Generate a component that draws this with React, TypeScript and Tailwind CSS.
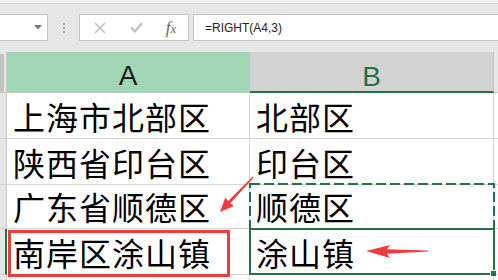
import React from 'react';

const cjk = { fontFamily: '"Noto Sans CJK SC", "Noto Sans", sans-serif' };

const rows = [
  { a: '上海市北部区', b: '北部区', h: 'h-[46px]' },
  { a: '陕西省印台区', b: '印台区', h: 'h-[46px]' },
  { a: '广东省顺德区', b: '顺德区', h: 'h-[44px]' },
  { a: '南岸区涂山镇', b: '涂山镇', h: 'h-[46px]' },
];

const FormulaBar: React.FC = () => (
  <div className="h-[52px] bg-[#e6e6e6] flex flex-col">
    <div className="h-[4px] bg-[#f1f1f1] border-b border-[#d5d5d5]" />
    <div className="flex items-start pt-[10px]">
      {/* Name box */}
      <div className="w-[48px] h-[27px] bg-white border-y border-r border-[#c6c6c6] flex items-center justify-end pr-[5px]">
        <svg width="8" height="5" viewBox="0 0 8 5">
          <path d="M0 0 H8 L4 4.5 Z" fill="#767676" />
        </svg>
      </div>
      {/* Grip dots */}
      <div className="w-[31px] h-[27px] flex flex-col items-center justify-center gap-[2px]">
        <span className="w-[2px] h-[2px] bg-[#a8a8a8]" />
        <span className="w-[2px] h-[2px] bg-[#a8a8a8]" />
        <span className="w-[2px] h-[2px] bg-[#a8a8a8]" />
      </div>
      {/* Cancel / enter / fx */}
      <div className="w-[110px] h-[27px] bg-white border border-[#c6c6c6] flex items-center">
        <div className="w-[38px] flex justify-center pl-[2px]">
          <svg width="12" height="12" viewBox="0 0 12 12">
            <path d="M1 1 L11 11 M11 1 L1 11" stroke="#bdbdbd" strokeWidth="1.6" />
          </svg>
        </div>
        <div className="w-[36px] flex justify-center">
          <svg width="13" height="11" viewBox="0 0 13 11">
            <path d="M1 5.5 L5 9.5 L12 1" stroke="#bdbdbd" strokeWidth="2" fill="none" />
          </svg>
        </div>
        <div className="w-[34px] flex justify-center">
          <span className="italic text-[17px] leading-none text-[#666]" style={{ fontFamily: '"Liberation Serif", serif' }}>
            f<span className="text-[13px]">x</span>
          </span>
        </div>
      </div>
      {/* Formula input */}
      <div className="ml-[4px] flex-1 h-[27px] bg-white border-y border-l border-[#c6c6c6] flex items-center pl-[11px]">
        <span className="text-[12px] text-[#222]" style={{ fontFamily: '"Liberation Sans", Arial, sans-serif' }}>
          =RIGHT(A4,3)
        </span>
      </div>
    </div>
  </div>
);

const Header: React.FC = () => (
  <div className="flex h-[41px]" style={{ fontFamily: '"Liberation Sans", Arial, sans-serif' }}>
    <div className="w-[7px] bg-[#e6e6e6] border-r border-b border-[#c8c8c8] flex items-end">
      <div className="w-[4px] h-[38px] bg-[#c2c2c2]" />
    </div>
    <div className="w-[243px] bg-[#a0d6b5] border-r border-b border-[#b8c8be] flex items-end justify-center pb-[2px]">
      <span className="text-[28px] leading-none text-[#1a1a1a]">A</span>
    </div>
    <div className="w-[244px] bg-[#d2d2d2] border-r border-[#c2c2c2] border-b-2 border-b-[#217346] flex items-end justify-center">
      <span className="text-[28px] leading-none text-[#217346]">B</span>
    </div>
    <div className="flex-1 bg-[#e6e6e6] border-b border-[#c8c8c8]" />
  </div>
);

export default function App() {
  return (
    <div className="relative w-[498px] h-[280px] overflow-hidden bg-white">
      <FormulaBar />
      <Header />
      {rows.map((r, i) => (
        <div key={i} className={`flex ${r.h}`}>
          <div className={`w-[7px] bg-[#e6e6e6] border-b border-[#d4d4d4] ${i === 3 ? 'border-r-2 border-r-[#217346]' : 'border-r border-r-[#c8c8c8]'}`} />
          <div className="relative w-[243px] border-r border-b border-[#d4d4d4] flex items-end pl-[6px] pb-[6px]">
            <span className="text-[32px] leading-none tracking-[1px] text-black" style={cjk}>{r.a}</span>
            {i === 3 && (
              <div className="absolute left-[1px] top-[1px] w-[222px] h-[47px] border-[3px] border-[#ee3b3b]" />
            )}
          </div>
          <div className="relative w-[244px] border-r border-b border-[#d4d4d4] flex items-end pl-[6px] pb-[6px]">
            <span className="text-[32px] leading-none tracking-[1px] text-black" style={cjk}>{r.b}</span>
            {i === 2 && (
              <svg className="absolute -left-[1px] -top-[2px]" width="246" height="47">
                <rect x="1" y="1" width="244" height="45" fill="none" stroke="#217346" strokeWidth="2" strokeDasharray="10 4" />
              </svg>
            )}
            {i === 3 && (
              <>
                <div className="absolute -left-[1px] -top-[1px] w-[246px] h-[47px] border-2 border-[#217346]" />
                <div className="absolute -right-[4px] -bottom-[3px] w-[7px] h-[7px] bg-[#217346] border border-white" />
              </>
            )}
          </div>
          <div className="flex-1 border-b border-[#d4d4d4]" />
        </div>
      ))}
      <div className="flex h-[10px]">
        <div className="w-[7px] bg-[#e6e6e6] border-r border-[#c8c8c8]" />
        <div className="w-[243px] border-r border-[#d4d4d4]" />
        <div className="w-[244px] border-r border-[#d4d4d4]" />
      </div>

      {/* red annotation arrows */}
      <svg className="absolute left-0 top-0 pointer-events-none" width="498" height="280">
        <polygon
          points="220,212 234,206 230.4,203.2 253.5,177.5 252.6,176.6 228.2,201.1 225.2,197.7"
          fill="#ee3b3b"
        />
        <polygon
          points="366,251 390,245 387,249.2 428,250.4 428,251.6 387,253.8 390,258"
          fill="#ee3b3b"
        />
      </svg>
    </div>
  );
}
